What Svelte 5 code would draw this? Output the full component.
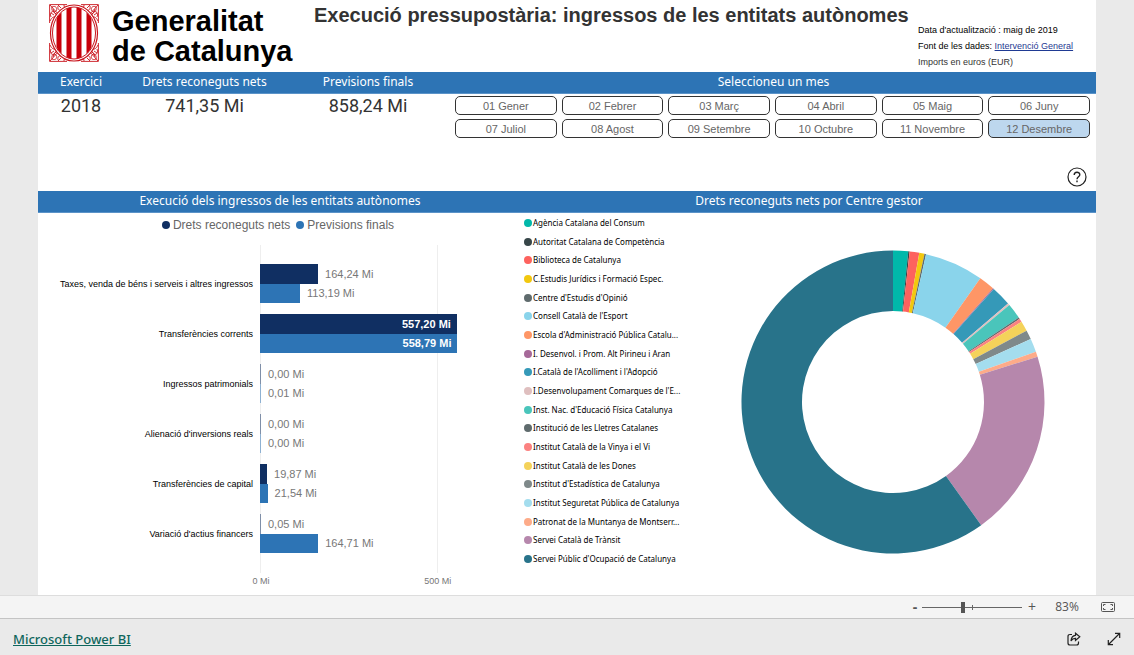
<script>
  const months = [
    '01 Gener', '02 Febrer', '03 Març', '04 Abril', '05 Maig', '06 Juny',
    '07 Juliol', '08 Agost', '09 Setembre', '10 Octubre', '11 Novembre', '12 Desembre'
  ];
  let selected = $state('12 Desembre');
  let zoom = $state(83);

  const axisMax = 600;
  const series = [
    { name: 'Drets reconeguts nets', color: '#102f62' },
    { name: 'Previsions finals', color: '#2d74b5' }
  ];
  const categories = [
    { name: 'Taxes, venda de béns i serveis i altres ingressos', values: [164.24, 113.19] },
    { name: 'Transferències corrents', values: [557.2, 558.79] },
    { name: 'Ingressos patrimonials', values: [0, 0.01] },
    { name: "Alienació d'inversions reals", values: [0, 0] },
    { name: 'Transferències de capital', values: [19.87, 21.54] },
    { name: "Variació d'actius financers", values: [0.05, 164.71] }
  ];
  const ticks = [0, 500];
  const format = (v) => v.toFixed(2).replace('.', ',') + ' Mi';

  // Each entry: name, colour, end angle in degrees clockwise from the top
  const centres = [
    ['Agència Catalana del Consum', '#01b8aa', 5.8],
    ['Autoritat Catalana de Competència', '#374649', 6.3],
    ['Biblioteca de Catalunya', '#fd625e', 10],
    ['C.Estudis Jurídics i Formació Espec.', '#f2c80f', 12],
    ["Centre d'Estudis d'Opinió", '#5f6b6d', 12.6],
    ["Consell Català de l'Esport", '#8ad4eb', 35.2],
    ["Escola d'Administració Pública Catalu...", '#fe9666', 41.3],
    ['I. Desenvol. i Prom. Alt Pirineu i Aran', '#a66999', 41.7],
    ["I.Català de l'Acolliment i l'Adopció", '#3599b8', 49.4],
    ["I.Desenvolupament Comarques de l'E...", '#dfbfbf', 50.2],
    ["Inst. Nac. d'Educació Física Catalunya", '#4ac5bb', 56.1],
    ['Institució de les Lletres Catalanes', '#5f6b6d', 56.7],
    ['Institut Català de la Vinya i el Vi', '#fb8281', 58],
    ['Institut Català de les Dones', '#f4d25a', 61.9],
    ["Institut d'Estadística de Catalunya", '#7f898a', 65.4],
    ['Institut Seguretat Pública de Catalunya', '#a4ddee', 70.6],
    ['Patronat de la Muntanya de Montserr...', '#fdab89', 72.6],
    ['Servei Català de Trànsit', '#b687ac', 144.4],
    ["Servei Públic d'Ocupació de Catalunya", '#28738a', 360]
  ];

  function point(r, deg) {
    const a = (deg * Math.PI) / 180;
    return `${(r * Math.sin(a)).toFixed(2)} ${(-r * Math.cos(a)).toFixed(2)}`;
  }
  function slice(from, to, outer = 151.5, inner = 91) {
    const large = to - from > 180 ? 1 : 0;
    return `M${point(outer, from)}A${outer} ${outer} 0 ${large} 1 ${point(outer, to)}` +
      `L${point(inner, to)}A${inner} ${inner} 0 ${large} 0 ${point(inner, from)}Z`;
  }
  const slices = centres.map(([name, color, end], i) => ({
    name, color, d: slice(i ? centres[i - 1][2] : 0, end)
  }));
</script>

<div class="page">
  <main class="report">
    <header class="head">
      <div class="logo">
        <svg viewBox="0 0 50 58" width="50" height="58" aria-hidden="true">
          <g fill="none" stroke="#c8141c" stroke-width="0.9">
            <g id="corner">
              <path d="M0.600 19V0.600H18M1 1L10 11M1 17C3 13 5 12 7 14M2 13C0 8 4 6 6 9S9 12 8 13M9 2C8 6 12 8 14 5M15 1C15 4 17 5 20 2M3 3C7 1 9 5 7 7S2 7 3 3M5 11L2 9M12 4L9 1M11 8C13 6 15 6 17 4M8 11C6 10 5 8 4 5" />
            </g>
            <use href="#corner" transform="translate(50 0) scale(-1 1)" />
            <use href="#corner" transform="translate(0 58) scale(1 -1)" />
            <use href="#corner" transform="translate(50 58) scale(-1 -1)" />
          </g>
          <clipPath id="oval"><ellipse cx="25" cy="29" rx="21" ry="26" /></clipPath>
          <ellipse cx="25" cy="29" rx="23.500" ry="28" fill="#fff" stroke="#c8141c" stroke-width="1.2" />
          <g clip-path="url(#oval)" fill="#c8000a">
            <rect x="7.500" y="0" width="5" height="58" />
            <rect x="17.500" y="0" width="5" height="58" />
            <rect x="27.500" y="0" width="5" height="58" />
            <rect x="37.500" y="0" width="5" height="58" />
          </g>
          <ellipse cx="25" cy="29" rx="21.500" ry="26" fill="none" stroke="#c8141c" stroke-width="1" />
        </svg>
        <span>Generalitat<br />de Catalunya</span>
      </div>
      <h1>Execució pressupostària: ingressos de les entitats autònomes</h1>
      <div class="info">
        <p>Data d'actualització : maig de 2019</p>
        <p>Font de les dades: <a href="#intervencio">Intervenció General</a></p>
        <p class="soft">Imports en euros (EUR)</p>
      </div>
    </header>

    <section class="summary">
      <h2>Exercici</h2>
      <h2>Drets reconeguts nets</h2>
      <h2>Previsions finals</h2>
      <h2>Seleccioneu un mes</h2>
      <p class="kpi">2018</p>
      <p class="kpi">741,35 Mi</p>
      <p class="kpi">858,24 Mi</p>
      <div class="months">
        {#each months as month}
          <button class:active={month === selected} onclick={() => (selected = month)}>{month}</button>
        {/each}
      </div>
    </section>

    <div class="help">
      <button aria-label="Ajuda">
        <svg viewBox="0 0 20 20" width="20" height="20" fill="none" stroke="#222">
          <circle cx="10" cy="10" r="9" stroke-width="1.2" />
          <path d="M7.2 8C7.2 4.4 12.8 4.4 12.8 7.8C12.8 9.8 10 9.8 10 12.2M10 13.6V15.2" stroke-width="1.4" />
        </svg>
      </button>
    </div>

    <div class="panels">
      <section>
        <h2>Execució dels ingressos de les entitats autònomes</h2>
        <ul class="series">
          {#each series as s}
            <li><i style:background={s.color}></i>{s.name}</li>
          {/each}
        </ul>
        <div class="chart">
          <div class="grid">
            {#each ticks as t}
              <div class="tick" style:left="{(t / axisMax) * 100}%"><span>{t} Mi</span></div>
            {/each}
          </div>
          {#each categories as c}
            <div class="row">
              <span class="name">{c.name}</span>
              <div class="bars">
                {#each c.values as v, i}
                  <div class="line">
                    <div class="bar" class:thin={v < 1} style:width="{(v / axisMax) * 100}%" style:background={series[i].color}>
                      {#if v > 500}{format(v)}{/if}
                    </div>
                    {#if v <= 500}<span>{format(v)}</span>{/if}
                  </div>
                {/each}
              </div>
            </div>
          {/each}
        </div>
      </section>

      <section>
        <h2>Drets reconeguts nets por Centre gestor</h2>
        <div class="donut">
          <ul>
            {#each centres as [name, color]}
              <li><i style:background={color}></i>{name}</li>
            {/each}
          </ul>
          <svg viewBox="-152 -152 304 304" role="img" aria-label="Drets reconeguts nets por Centre gestor">
            {#each slices as s}
              <path d={s.d} fill={s.color} />
            {/each}
          </svg>
        </div>
      </section>
    </div>
  </main>

  <div class="zoombar">
    <button class="minus" aria-label="Redueix" onclick={() => (zoom -= 10)}>-</button>
    <input type="range" min="10" max="190" bind:value={zoom} aria-label="Zoom" />
    <button aria-label="Amplia" onclick={() => (zoom += 10)}>+</button>
    <span class="percent">{zoom}%</span>
    <button class="fit" aria-label="Ajusta a la pàgina">
      <svg viewBox="0 0 14 10" width="14" height="10" fill="none" stroke="#555">
        <rect x="0.5" y="0.5" width="13" height="9" rx="1" />
        <path d="M2.5 4V2.5H4.5M9.5 2.5H11.5V4M11.5 6V7.5H9.5M4.5 7.5H2.5V6" />
      </svg>
    </button>
  </div>

  <footer>
    <a href="#powerbi">Microsoft Power BI</a>
    <div class="actions">
      <button aria-label="Comparteix">
        <svg viewBox="0 0 14 14" width="14" height="14" fill="none" stroke="#222" stroke-width="1.2">
          <path d="M5 2.5H3Q1 2.5 1 4.500V11Q1 13 3 13H9.500Q11.500 13 11.500 11V9.500" />
          <path d="M8.500 1.200L12.800 4.800L8.500 8.400V6.400Q5.500 6.300 4 9Q4.300 3.800 8.500 3.300Z" />
        </svg>
      </button>
      <button aria-label="Pantalla completa">
        <svg viewBox="0 0 14 14" width="14" height="14" fill="none" stroke="#222" stroke-width="1.2">
          <path d="M1.500 12.500L12.500 1.500M8 1.300H12.700V6M1.300 8V12.700H6" />
        </svg>
      </button>
    </div>
  </footer>
</div>

<style>
  :global(body) {
    margin: 0;
  }
  .page {
    min-height: 100vh;
    display: flex;
    flex-direction: column;
    background: #eaeaea;
    font-family: 'Liberation Sans', Arial, sans-serif;
    color: #000;
  }
  h1, h2, p, ul {
    margin: 0;
    padding: 0;
    list-style: none;
  }
  button {
    font: inherit;
    color: inherit;
    padding: 0;
    border: 0;
    background: none;
    cursor: pointer;
  }
  svg {
    display: block;
  }
  .report {
    flex: 1;
    margin: 0 38px;
    background: #fff;
    display: flex;
    flex-direction: column;
  }
  .head {
    height: 72px;
    display: flex;
    align-items: flex-start;
  }
  .logo {
    display: flex;
    gap: 13px;
    padding: 4px 0 0 11px;
    width: 265px;
    font-size: 29px;
    line-height: 30px;
    font-weight: bold;
    white-space: nowrap;
  }
  .logo span {
    margin-top: 2px;
  }
  h1 {
    flex: 1;
    font-size: 20px;
    line-height: 30px;
    color: #333;
    white-space: nowrap;
  }
  .info {
    width: 178px;
    padding-top: 22px;
    font-size: 9px;
    line-height: 16px;
    white-space: nowrap;
  }
  .info a {
    color: #1f3a93;
  }
  .soft {
    color: #333;
  }
  .summary {
    display: grid;
    grid-template-columns: 86px 161px 166px 1fr;
  }
  h2 {
    height: 21px;
    border-bottom: 1px solid #5b93c8;
    background: #2d74b5;
    color: #fff;
    font: 12px/19px 'Noto Sans', 'Open Sans', sans-serif;
    text-align: center;
  }
  .kpi {
    font: 18px/23px Roboto, sans-serif;
    color: #333;
    text-align: center;
  }
  .months {
    display: grid;
    grid-template-columns: repeat(6, 1fr);
    gap: 4px 5px;
    padding: 2px 6px 0 4px;
  }
  .months button {
    height: 19px;
    border: 1px solid #333;
    border-radius: 5px;
    background: #fff;
    color: #666;
    font-size: 11px;
    line-height: 16px;
  }
  .months .active {
    background: #bdd7ee;
  }
  .help {
    display: flex;
    justify-content: flex-end;
    padding: 29px 9px 4px;
  }
  .panels {
    flex: 1;
    display: grid;
    grid-template-columns: 484px 1fr;
  }
  .panels section {
    display: flex;
    flex-direction: column;
  }
  i {
    flex: none;
    width: 8px;
    height: 8px;
    border-radius: 50%;
  }
  .series {
    display: flex;
    justify-content: center;
    gap: 6px;
    padding-right: 4px;
    font-size: 12px;
    line-height: 24px;
    color: #666;
  }
  .series li {
    display: flex;
    align-items: center;
    gap: 3px;
  }
  .chart {
    position: relative;
    display: flex;
    flex-direction: column;
    gap: 11px;
    padding: 27px 50px 40px 0;
  }
  .grid {
    position: absolute;
    inset: 8px 50px 20px 222px;
  }
  .tick {
    position: absolute;
    top: 0;
    bottom: 0;
    border-left: 1px solid #eee;
  }
  .tick span {
    position: absolute;
    top: 100%;
    left: 0;
    transform: translateX(-50%);
    font-size: 9px;
    line-height: 16px;
    color: #777;
    white-space: nowrap;
  }
  .row {
    position: relative;
    display: flex;
    gap: 7px;
    height: 39px;
  }
  .name {
    width: 215px;
    font-size: 9px;
    line-height: 40px;
    text-align: right;
    white-space: nowrap;
  }
  .bars {
    flex: 1;
    display: flex;
    flex-direction: column;
  }
  .line {
    flex: 1;
    display: flex;
    align-items: center;
    gap: 7px;
    font-size: 11px;
    color: #777;
    white-space: nowrap;
  }
  .bar {
    box-sizing: border-box;
    height: 100%;
    display: flex;
    align-items: center;
    justify-content: flex-end;
    padding-right: 6px;
    color: #fff;
    font-weight: bold;
  }
  .thin {
    min-width: 1px;
    padding: 0;
    opacity: 0.5;
  }
  .donut {
    display: flex;
    height: 355px;
  }
  .donut ul {
    display: flex;
    flex-direction: column;
    justify-content: space-between;
    width: 166px;
    padding: 3px 0 2px 2px;
    font: 8px/14px 'Noto Sans', 'Open Sans', sans-serif;
    white-space: nowrap;
  }
  .donut li {
    display: flex;
    align-items: center;
    gap: 1px;
  }
  .donut svg {
    flex: 1;
    height: 304px;
    margin-top: 37px;
  }
  .zoombar {
    display: flex;
    align-items: center;
    justify-content: flex-end;
    height: 22px;
    padding-right: 19px;
    border-top: 1px solid #ddd;
    border-bottom: 1px solid #c4c4c4;
    background: #f4f4f4;
    color: #555;
    font: 12px/20px 'Open Sans', 'Noto Sans', sans-serif;
  }
  .zoombar button {
    width: 10px;
    font-size: 14px;
  }
  .zoombar .minus {
    font-weight: bold;
  }
  .zoombar .fit {
    width: 14px;
  }
  .percent {
    width: 64px;
    padding-right: 4px;
    box-sizing: border-box;
    text-align: center;
  }
  input {
    appearance: none;
    width: 100px;
    height: 12px;
    margin: 0 5px 0 2px;
    background:
      linear-gradient(#666, #666) 50% 50% / 1px 5px no-repeat,
      linear-gradient(#666, #666) 50% 50% / 100% 1px no-repeat;
  }
  input::-webkit-slider-thumb {
    appearance: none;
    width: 4px;
    height: 11px;
    background: #555;
  }
  footer {
    display: flex;
    align-items: center;
    justify-content: space-between;
    height: 36px;
    padding: 0 13px;
    font: 500 13px/36px 'Noto Sans', 'Open Sans', sans-serif;
  }
  footer a {
    color: #0f665c;
    padding-top: 4px;
  }
  .actions {
    display: flex;
    gap: 26px;
    padding-top: 4px;
  }
</style>
